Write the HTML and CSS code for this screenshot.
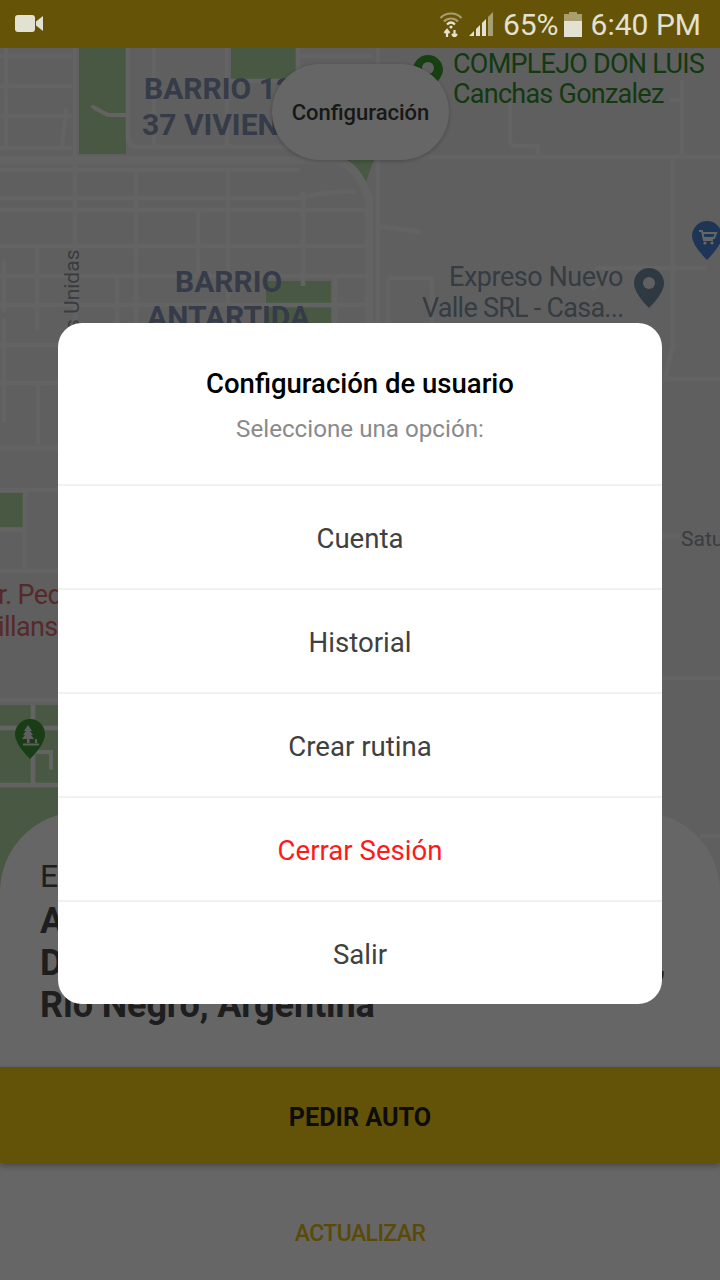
FILE: index.html
```html
<!DOCTYPE html>
<html lang="es">
  <head>
    <meta charset="UTF-8" />
    <meta name="viewport" content="width=device-width, initial-scale=1.0" />
    <title>Configuración de usuario</title>
    <link rel="stylesheet" href="styles.css">
  </head>
  <body>
    <div class="screen">
      <header class="status-bar">
        <svg class="status-video" width="28" height="18" viewBox="0 0 28 18">
          <rect x="0" y="0" width="20" height="17" rx="3" />
          <path d="M21 6.5 L28 1 V16 L21 10.5 Z" />
        </svg>
        <div class="status-right">
          <svg class="status-wifi" width="24" height="26" viewBox="0 0 24 26">
            <path class="wifi-dim" d="M1.5 7 C7 1 17 1 22.5 7" />
            <path class="wifi-dim" d="M5 10.5 C9 6.5 15 6.5 19 10.5" />
            <path d="M8 13.5 C10.5 11 13.5 11 16 13.5" />
            <circle cx="12" cy="16" r="1.6" class="wifi-dot" />
            <path d="M8 26 V20 M5.5 22 L8 19 L10.5 22 M15.5 19 V25 M13 23 L15.5 26 L18 23" />
          </svg>
          <svg class="status-signal" width="24" height="24" viewBox="0 0 24 24">
            <path d="M0 24 L5 19 V24 Z" />
            <path d="M7 24 V17 L11 13 V24 Z" />
            <path d="M13 24 V11 L17 7 V24 Z" />
            <path class="signal-dim" d="M19 24 V5 L24 0 V24 Z" />
          </svg>
          <span class="status-percent">65%</span>
          <svg class="status-battery" width="18" height="25" viewBox="0 0 18 25">
            <path class="battery-empty" d="M5 0 H13 V2 H18 V9 H0 V2 H5 Z" />
            <rect x="0" y="9" width="18" height="16" />
          </svg>
          <span class="status-time">6:40 PM</span>
        </div>
      </header>

      <main class="map">
        <svg class="map-canvas" width="720" height="844" viewBox="0 48 720 844">
          <!-- parks -->
          <rect class="park" x="79" y="48" width="47" height="106" />
          <rect class="park" x="231" y="48" width="65" height="33" />
          <path class="park" d="M342 160 H374 L365 184 Z" />
          <rect class="park" x="266" y="281" width="65" height="45" />
          <rect class="park" x="0" y="493" width="23" height="34" />
          <rect class="park" x="0" y="705" width="60" height="187" />

          <!-- main roads -->
          <path class="road-wide" d="M0 160 H335 Q358 164 369 200 V330" />
          <path class="road" d="M75 48 V330" />
          <path class="road" d="M378 48 V330" />
          <path class="road" d="M378 157 H720" />
          <path class="road" d="M673 157 V345 L665 379 H720" />
          <path class="road" d="M682 157 V80 M670 100 H682" />

          <!-- left grid, top -->
          <path class="road" d="M0 56 H72 M0 86 H72 M0 116 H72 M0 148 H72 M6 48 V148" />
          <path class="road" d="M128 48 V138 Q128 147 137 147 H300 M154 48 V147 M227 48 V147 M298 48 V147 M298 56 H372 M230 81 H300" />
          <path class="road-thin" d="M93 107 L108 115 H128 M66 110 L62 146" />
          <path class="road" d="M0 170 H300" />

          <!-- left grid, middle -->
          <path class="road" d="M0 198 H300 Q335 190 355 192 M0 210 H370 M0 246 H370 M0 276 H370 M0 305 H372" />
          <path class="road" d="M136 170 V330 M228 170 V330 M198 210 V276 M303 192 V286 M37 246 V330 M117 276 V330 M335 278 V330" />
          <path class="road-thin" d="M4 262 V310" />
          <path class="road" d="M378 226 L421 232" />

          <!-- right side -->
          <path class="road" d="M510 101 V142 Q510 146 515 146 H538 V157" />
          <path class="road" d="M388 330 V282 Q388 278 392 278 H432 V330" />
          <path class="road" d="M595 268 H707 M592 289 L615 272" />
          <path class="road" d="M662 536 H680 M662 678 H720 M700 836 H720" />

          <!-- left strip next to the dialog -->
          <path class="road" d="M0 345 H60 M0 383 H60 M0 448 H60 M0 490 H60 M0 530 H25 M0 571 H60 M0 700 H60 M0 728 H60 M0 785 H60" />
          <path class="road" d="M38 383 V445 M25 490 V571 M33 705 V785" />
          <path class="road-thin" d="M4 320 V420 M35 752 H51 V768" />

          <!-- labels -->
          <text class="label-area" x="144" y="99">BARRIO 12</text>
          <text class="label-area" x="142" y="135">37 VIVIENDAS</text>
          <text class="label-area" x="175" y="292">BARRIO</text>
          <text class="label-area" x="147" y="327">ANTARTIDA</text>
          <text class="label-park" x="453" y="73">COMPLEJO DON LUIS</text>
          <text class="label-park" x="453" y="103">Canchas Gonzalez</text>
          <text class="label-place label-place-wide" x="449" y="286">Expreso Nuevo</text>
          <text class="label-place" x="422" y="317">Valle SRL - Casa...</text>
          <text class="label-street" transform="translate(79 330) rotate(-90)">s Unidas</text>
          <text class="label-street" x="681" y="546">Satu</text>
          <text class="label-health" x="-2" y="604">r. Pedro</text>
          <text class="label-health" x="-2" y="636">illans</text>

          <!-- pins -->
          <path class="pin-park" d="M428 91 Q413 78 413 70 A15 15 0 0 1 443 70 Q443 78 428 91 Z" />
          <circle class="pin-hole" cx="428" cy="68" r="6" />

          <path class="pin-place" d="M649 308 Q634 293 634 283 A15 15 0 0 1 664 283 Q664 293 649 308 Z" />
          <circle class="pin-hole" cx="649" cy="283" r="6" />

          <path class="pin-shop" d="M707 260 Q692 245 692 236 A15 15 0 0 1 722 236 Q722 245 707 260 Z" />
          <path class="pin-cart" d="M699 231 H702 L704 240 H713 M703 233 H716 L714 238 H704" />
          <circle class="pin-cart-wheel" cx="705" cy="243" r="1.6" />
          <circle class="pin-cart-wheel" cx="712" cy="243" r="1.6" />

          <path class="pin-tree" d="M30 759 Q15 744 15 734 A15 15 0 0 1 45 734 Q45 744 30 759 Z" />
          <path class="pin-tree-mark" d="M28 725 L32 731 H30 L33 735 H31 L34 739 H29.5 V743 H27 V739 H22 L25 735 H23 L26 731 H24 Z M23 743.5 H39 V745.5 H23 Z M35 739 H37 V743 H35 Z" />
        </svg>
        <button class="config-pill">Configuración</button>
      </main>

      <section class="sheet">
        <div class="address">
          <p class="address-label">Estás en:</p>
          <p class="address-line">Antártida Argentina 1200,</p>
          <p class="address-line address-line-wide">Departamento General Roca, G. Roca,</p>
          <p class="address-line">Río Negro, Argentina</p>
        </div>
        <button class="order-btn">PEDIR AUTO</button>
        <button class="refresh-btn">ACTUALIZAR</button>
      </section>

      <div class="scrim">
        <div class="dialog">
          <div class="dialog-head">
            <h2 class="dialog-title">Configuración de usuario</h2>
            <p class="dialog-subtitle">Seleccione una opción:</p>
          </div>
          <ul class="dialog-list">
            <li class="dialog-item">Cuenta</li>
            <li class="dialog-item">Historial</li>
            <li class="dialog-item">Crear rutina</li>
            <li class="dialog-item danger">Cerrar Sesión</li>
            <li class="dialog-item">Salir</li>
          </ul>
        </div>
      </div>
    </div>
  </body>
</html>
```

FILE: styles.css
```css
body {
  font-family: Roboto, "Noto Sans", sans-serif;
  margin: 0;
  padding: 0;
  background-color: #fff;
}

p,
h2,
ul {
  margin: 0;
  padding: 0;
}

button {
  font-family: inherit;
  border: 0;
  padding: 0;
  background: none;
}

.screen {
  position: relative;
  display: flex;
  flex-direction: column;
  width: 720px;
  height: 1280px;
  overflow: hidden;
}

/* status bar sits above the scrim, its colour is already dimmed */
.status-bar {
  position: relative;
  z-index: 3;
  flex: 0 0 48px;
  display: flex;
  align-items: center;
  justify-content: space-between;
  padding: 0 19px 0 15px;
  background-color: #655408;
  color: #e3e1d1;
  fill: #e3e1d1;
}

.status-right {
  display: flex;
  align-items: center;
}

.status-video {
  margin-top: -1px;
}

.status-wifi {
  margin-right: 6px;
  fill: none;
  stroke: #e3e1d1;
  stroke-width: 2.2;
}

.wifi-dim {
  stroke: #a89e6e;
}

.wifi-dot {
  fill: #e3e1d1;
  stroke: none;
}

.status-signal {
  margin-right: 10px;
}

.signal-dim {
  fill: #a89e6e;
}

.status-percent {
  font-size: 30px;
  margin-right: 5px;
}

.status-battery {
  margin-right: 9px;
}

.battery-empty {
  fill: #a89e6e;
}

.status-time {
  font-size: 30px;
}

/* map */
.map {
  position: relative;
  flex: 1;
  background-color: #eeeeee;
}

.map-canvas {
  position: absolute;
  top: 0;
  left: 0;
}

.park {
  fill: #b4dca8;
}

.road,
.road-wide,
.road-thin {
  fill: none;
  stroke: #f8f8f8;
  stroke-width: 4.5;
}

.road-wide {
  stroke-width: 8;
}

.road-thin {
  stroke-width: 4;
  stroke-linecap: round;
}

.label-area {
  font-size: 30px;
  font-weight: 700;
  fill: #8494b4;
}

.label-park {
  font-size: 27px;
  letter-spacing: -0.75px;
  fill: #30902a;
}

.label-place {
  font-size: 27px;
  letter-spacing: -0.75px;
  fill: #8496a6;
}

.label-place-wide {
  letter-spacing: -0.45px;
}

.label-street {
  font-size: 21px;
  fill: #8f97a2;
}

.label-health {
  font-size: 27px;
  letter-spacing: -0.6px;
  fill: #d86a6a;
}

.pin-park {
  fill: #38a02e;
}

.pin-place {
  fill: #7690a2;
}

.pin-hole {
  fill: #f0f0f0;
}

.pin-shop {
  fill: #4f86d8;
}

.pin-cart {
  fill: none;
  stroke: #fff;
  stroke-width: 2;
}

.pin-cart-wheel {
  fill: #fff;
}

.pin-tree {
  fill: #3f9a32;
}

.pin-tree-mark {
  fill: #eee;
}

.config-pill {
  position: absolute;
  top: 16px;
  left: 272px;
  width: 177px;
  height: 96px;
  border-radius: 48px;
  background-color: #fff;
  box-shadow: 0 1px 4px rgba(0, 0, 0, 0.25);
  font-size: 22px;
  font-weight: 500;
  color: #3c3c3c;
}

/* bottom sheet */
.sheet {
  position: relative;
  display: flex;
  flex-direction: column;
  margin-top: -80px;
  flex: 0 0 468px;
  border-radius: 80px 80px 0 0;
  background-color: #fff;
}

.address {
  padding: 43px 40px 0;
  font-size: 32px;
  line-height: 42px;
  color: #4b4b4b;
  white-space: nowrap;
}

.address-label {
  margin-bottom: 3px;
}

.address-line {
  font-size: 36px;
  font-weight: 700;
  letter-spacing: -0.1px;
}

.address-line-wide {
  letter-spacing: 0.55px;
}

.order-btn {
  flex: 0 0 96px;
  margin-top: 41px;
  padding-top: 5px;
  background-color: #f8cf14;
  box-shadow: 0 3px 6px rgba(0, 0, 0, 0.3);
  font-size: 25.2px;
  font-weight: 700;
  color: #222;
}

.refresh-btn {
  flex: 1;
  padding-top: 24px;
  font-size: 23px;
  font-weight: 500;
  letter-spacing: -0.6px;
  color: #e0ba10;
}

/* dialog */
.scrim {
  position: absolute;
  top: 48px;
  left: 0;
  right: 0;
  bottom: 0;
  z-index: 2;
  display: flex;
  align-items: center;
  justify-content: center;
  padding-bottom: 1px;
  background-color: rgba(0, 0, 0, 0.6);
}

.dialog {
  width: 604px;
  border-radius: 24px;
  background-color: #fff;
  overflow: hidden;
}

.dialog-head {
  height: 161px;
  box-sizing: border-box;
  padding-top: 44px;
  text-align: center;
}

.dialog-title {
  font-size: 27.5px;
  line-height: 34px;
  font-weight: 500;
  color: #000;
}

.dialog-subtitle {
  margin-top: 13px;
  font-size: 24.2px;
  line-height: 30px;
  color: #8a8a8a;
}

.dialog-list {
  list-style: none;
}

.dialog-item {
  display: flex;
  align-items: center;
  justify-content: center;
  box-sizing: border-box;
  height: 104px;
  padding-top: 2px;
  border-top: 2px solid #f2f2f2;
  font-size: 27.6px;
  color: #404040;
}

.danger {
  color: #ff1a1a;
}
```
